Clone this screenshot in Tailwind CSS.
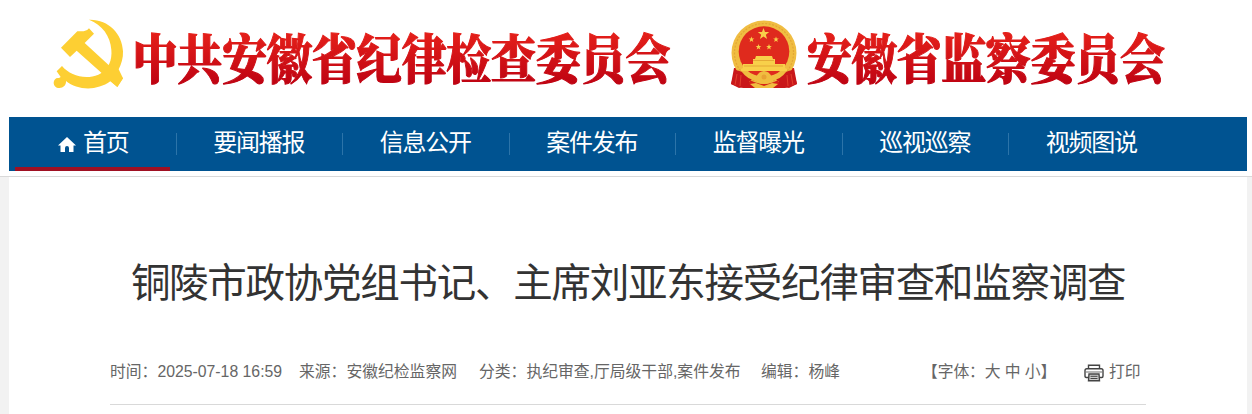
<!DOCTYPE html>
<html lang="zh-CN">
<head>
    <meta charset="UTF-8">
    <meta name="viewport" content="width=device-width, initial-scale=1.0">
    <title>安徽纪检监察网</title>
    <script src="https://cdn.jsdelivr.net/npm/@tailwindcss/browser@4"></script>
</head>
<body class="bg-white h-[414px] overflow-hidden flex flex-col font-['Liberation_Sans','Noto_Sans_CJK_SC',sans-serif]">

    <!-- Logo banner -->
    <header class="h-[117px] shrink-0">
        <svg width="1252" height="117" viewBox="0 0 1252 117" role="img">
            <defs>
                <linearGradient id="red" x1="0" y1="0" x2="0" y2="1">
                    <stop offset="0.2" stop-color="#e5201a" />
                    <stop offset="0.9" stop-color="#bd0212" />
                </linearGradient>
                <path id="star" d="M0-6L1.500-2H5.700L2.300.7 3.600 5 0 2.400-3.600 5-2.300.7-5.700-2H-1.500z" />
            </defs>
            <!-- Party emblem -->
            <g transform="translate(50 14) scale(0.33333)" fill="#fdcf33">
                <path d="M117 17C174 15 217 58 219 112C220 133 214 150 206 166L219 193L202 219L181 202C140 232 82 229 48 201C49 213 40 222 28 222C18 222 11 215 11 206C11 197 18 190 27 192L32 189L20 172L36 156C60 184 105 199 145 182C176 168 187 138 184 107C181 66 157 33 117 17Z" />
                <path d="M33 101L82 52L101 52Q112 51 117 43L132 59L104 87L219 193L202 219L80 110L60 129Z" />
            </g>
            <text x="0" y="0" transform="translate(132.500 78.500) scale(1 1.180)" font-size="45" font-weight="900" textLength="538" fill="url(#red)" stroke="url(#red)" stroke-width="0.900" class="font-['Noto_Serif_CJK_SC','Noto_Sans_CJK_SC',serif]">中共安徽省纪律检查委员会</text>
            <!-- National emblem -->
            <g transform="translate(720 10)">
                <path d="M14 58L11 74 19 77 23 78H65L69 77 77 74 74 58z" fill="#c9171a" />
                <circle cx="44" cy="43" r="32.500" fill="#f0bd42" />
                <circle cx="44" cy="43" r="29.500" fill="none" stroke="#e3a636" stroke-width="1.200" stroke-dasharray="2 1.500" />
                <circle cx="44" cy="41.500" r="25.300" fill="#df2a1d" />
                <g fill="#f8d04a">
                    <use href="#star" transform="translate(43.500 24)" />
                    <use href="#star" transform="translate(31.500 29.500) scale(0.500)" />
                    <use href="#star" transform="translate(56 29.500) scale(0.500)" />
                    <use href="#star" transform="translate(38.500 37) scale(0.500)" />
                    <use href="#star" transform="translate(49 37) scale(0.500)" />
                    <path d="M36 46h16l1 3h2v5h10v4l2 1v2H21v-2l2-1v-4h10v-5h2z" />
                </g>
                <path d="M33 50.500h21M24 56h39" stroke="#dc9a2c" stroke-width="0.700" />
                <path d="M15 60q8 1 13 6l4 3-4 4-5 4-4 1-8-4z" fill="#c9171a" />
                <path d="M73 60q-8 1-13 6l-4 3 4 4 5 4 4 1 8-4z" fill="#c9171a" />
                <path d="M17 64l-2 11M21 65l-1 11M71 64l2 11M67 65l1 11" stroke="#e84a32" stroke-width="0.800" />
                <path d="M30 70q14 8 28 0l1 4-7 4H36l-7-4z" fill="#d62218" />
                <path d="M22 62q8 0 14 5 3-6 8-6t8 6q6-5 14-5-5 7-13 8-3 4-9 4t-9-4q-8-1-13-8z" fill="#f0bd40" />
                <circle cx="44" cy="67" r="2.500" fill="#e8a233" />
                <path d="M30 74l6-1 8 3 8-3 6 1-5 4H35z" fill="#f0bd40" />
            </g>
            <text x="0" y="0" transform="translate(807 78.500) scale(1 1.180)" font-size="45" font-weight="900" textLength="358" fill="url(#red)" stroke="url(#red)" stroke-width="0.900" class="font-['Noto_Serif_CJK_SC','Noto_Sans_CJK_SC',serif]">安徽省监察委员会</text>
        </svg>
    </header>

    <!-- Navigation -->
    <nav class="ml-[9px] mr-[5px] h-[54px] shrink-0 bg-[#005391] text-white text-[24px] tracking-[-1.25px] leading-[52px] flex">
        <a class="w-[166.5px] pl-[6px] pr-[6px] flex">
            <span class="w-full border-b-4 border-[#a01023] flex items-center pl-[43px]">
                <svg class="mr-[7px] mt-[4px]" width="18" height="15" viewBox="0 0 18 15" fill="#fff"><path d="M9 0l9 8.500h-2.500V15H11v-4a2 2 0 0 0-4 0v4H2.500V8.500H0z" /></svg>
                <span class="mt-[2px]">首页</span>
            </span>
        </a>
        <a class="w-[166.5px] flex items-center before:w-px before:h-[22px] before:bg-[#2c74a9]"><span class="grow text-center pb-[2px] pr-px">要闻播报</span></a>
        <a class="w-[166.5px] flex items-center before:w-px before:h-[22px] before:bg-[#2c74a9]"><span class="grow text-center pb-[2px] pr-px">信息公开</span></a>
        <a class="w-[166.5px] flex items-center before:w-px before:h-[22px] before:bg-[#2c74a9]"><span class="grow text-center pb-[2px] pr-px">案件发布</span></a>
        <a class="w-[166.5px] flex items-center before:w-px before:h-[22px] before:bg-[#2c74a9]"><span class="grow text-center pb-[2px] pr-px">监督曝光</span></a>
        <a class="w-[166.5px] flex items-center before:w-px before:h-[22px] before:bg-[#2c74a9]"><span class="grow text-center pb-[2px] pr-px">巡视巡察</span></a>
        <a class="w-[166.5px] flex items-center before:w-px before:h-[22px] before:bg-[#2c74a9]"><span class="grow text-center pb-[2px] pr-px">视频图说</span></a>
    </nav>

    <!-- Article -->
    <div class="mt-[5px] border-t border-[#d9d9d9] bg-[#f2f2f2] grow pl-[9px] pr-[5px]">
        <main class="bg-white h-full pt-[77px]">
            <h1 class="text-[39.5px] leading-[58px] tracking-[-1.26px] text-[#333] text-center whitespace-nowrap">铜陵市政协党组书记、主席刘亚东接受纪律审查和监察调查</h1>
            <div class="ml-[101px] mr-[101px] mt-[48px] h-[45px] border-b border-[#d9d9d9] flex text-[15.8px] leading-[24px] text-[#666] whitespace-nowrap">
                <span class="w-[189px]">时间：2025-07-18 16:59</span>
                <span class="w-[180px]">来源：安徽纪检监察网</span>
                <span class="w-[282px]">分类：执纪审查,厅局级干部,案件发布</span>
                <span class="w-[161px]">编辑：杨峰</span>
                <span class="w-[162px] tracking-[-0.1px]">【字体：大 中 小】</span>
                <svg class="mt-[4px] mr-[5px]" width="20" height="18" viewBox="0 0 20 18" fill="none" stroke="#444" stroke-width="1.4">
                    <path d="M4.500 4.500V1.200h11v3.300M4.500 13.500H2.200Q1 13.500 1 12V6.500Q1 4.700 2.800 4.700h14.400Q19 4.700 19 6.500V12q0 1.500-1.200 1.500h-2.300" />
                    <path d="M2 8h16" stroke="#999" />
                    <path d="M5 10h10l.5 6.800h-11z" fill="#ccc" />
                    <path d="M6.500 12.300h7M6.500 14.500h7" stroke-width="1" />
                </svg>
                <span>打印</span>
            </div>
        </main>
    </div>

</body>
</html>
